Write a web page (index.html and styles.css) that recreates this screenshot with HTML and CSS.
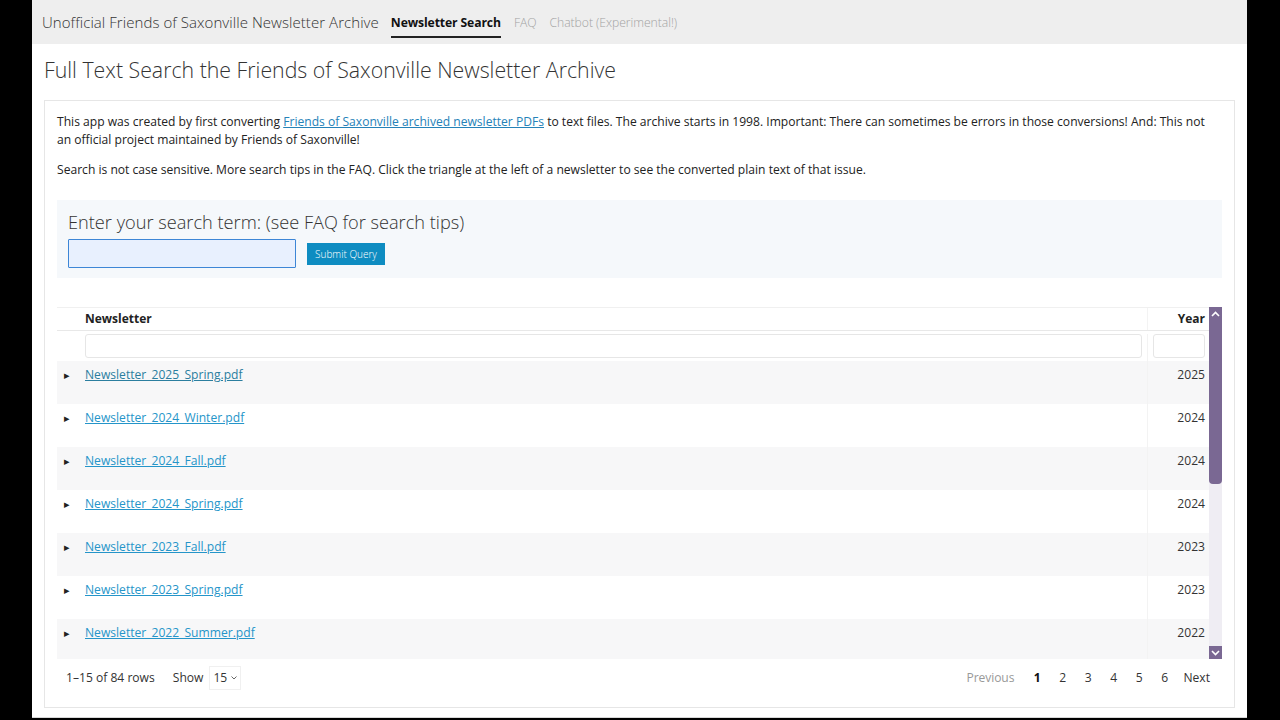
FILE: index.html
```html
<!DOCTYPE html>
<html>
<head>
<meta charset="utf-8">
<title>Newsletter Search</title>
<link rel="stylesheet" href="styles.css">
</head>
<body>
<div class="page">
  <nav class="navbar">
    <span class="brand">Unofficial Friends of Saxonville Newsletter Archive</span>
    <a class="nav-item active">Newsletter Search</a>
    <a class="nav-item">FAQ</a>
    <a class="nav-item">Chatbot (Experimental!)</a>
  </nav>
  <main class="content">
    <h1 class="title">Full Text Search the Friends of Saxonville Newsletter Archive</h1>
    <section class="card">
      <p class="intro">This app was created by first converting <a class="link" href="#">Friends of Saxonville archived newsletter PDFs</a> to text files. The archive starts in 1998. Important: There can sometimes be errors in those conversions! And: This not an official project maintained by Friends of Saxonville!</p>
      <p class="intro">Search is not case sensitive. More search tips in the FAQ. Click the triangle at the left of a newsletter to see the converted plain text of that issue.</p>
      <div class="search-panel">
        <label class="search-label">Enter your search term: (see FAQ for search tips)</label>
        <div class="search-row">
          <input class="search-input" type="text">
          <button class="submit-btn">Submit Query</button>
        </div>
      </div>
      <div class="table-wrap">
        <div class="table-scroll">
          <div class="grid header-row">
            <div class="cell"></div>
            <div class="cell name">Newsletter</div>
            <div class="cell year">Year</div>
          </div>
          <div class="grid filter-row">
            <div class="cell"></div>
            <div class="cell name"><span class="filter-box"></span></div>
            <div class="cell year"><span class="filter-box"></span></div>
          </div>
          <div class="grid row odd"><div class="cell arrow">&#9656;</div><div class="cell name"><a class="row-link first">Newsletter_2025_Spring.pdf</a></div><div class="cell year">2025</div></div>
          <div class="grid row"><div class="cell arrow">&#9656;</div><div class="cell name"><a class="row-link">Newsletter_2024_Winter.pdf</a></div><div class="cell year">2024</div></div>
          <div class="grid row odd"><div class="cell arrow">&#9656;</div><div class="cell name"><a class="row-link">Newsletter_2024_Fall.pdf</a></div><div class="cell year">2024</div></div>
          <div class="grid row"><div class="cell arrow">&#9656;</div><div class="cell name"><a class="row-link">Newsletter_2024_Spring.pdf</a></div><div class="cell year">2024</div></div>
          <div class="grid row odd"><div class="cell arrow">&#9656;</div><div class="cell name"><a class="row-link">Newsletter_2023_Fall.pdf</a></div><div class="cell year">2023</div></div>
          <div class="grid row"><div class="cell arrow">&#9656;</div><div class="cell name"><a class="row-link">Newsletter_2023_Spring.pdf</a></div><div class="cell year">2023</div></div>
          <div class="grid row odd"><div class="cell arrow">&#9656;</div><div class="cell name"><a class="row-link">Newsletter_2022_Summer.pdf</a></div><div class="cell year">2022</div></div>
          <div class="grid row"><div class="cell arrow">&#9656;</div><div class="cell name"><a class="row-link">Newsletter_2022_Spring.pdf</a></div><div class="cell year">2022</div></div>
        </div>
        <div class="scrollbar">
          <div class="sb-btn"><svg width="9" height="6" viewBox="0 0 9 6"><path d="M1 5 L4.5 1.5 L8 5" fill="none" stroke="#fff" stroke-width="1.6"/></svg></div>
          <div class="sb-track"><div class="sb-thumb"></div></div>
          <div class="sb-btn"><svg width="9" height="6" viewBox="0 0 9 6"><path d="M1 1 L4.5 4.5 L8 1" fill="none" stroke="#fff" stroke-width="1.6"/></svg></div>
        </div>
      </div>
      <div class="table-footer">
        <div class="rows-info">
          <span class="count">1–15 of 84 rows</span>
          <span class="show">Show</span>
          <span class="page-size">15 <svg width="6" height="4" viewBox="0 0 6 4"><path d="M0.5 0.5 L3 3 L5.5 0.5" fill="none" stroke="#555" stroke-width="0.9"/></svg></span>
        </div>
        <div class="pager">
          <span class="prev">Previous</span>
          <span class="pg current">1</span>
          <span class="pg">2</span>
          <span class="pg">3</span>
          <span class="pg">4</span>
          <span class="pg">5</span>
          <span class="pg">6</span>
          <span class="next">Next</span>
        </div>
      </div>
    </section>
  </main>
</div>
</body>
</html>
```
FILE: styles.css
```css
* { box-sizing: border-box; }
html, body { margin: 0; padding: 0; }
body {
  background: #000;
  font-family: "Open Sans", "Noto Sans", sans-serif;
  color: #222;
}
.page {
  margin-left: 32px;
  width: 1215px;
  height: 718px;
  background: #fff;
  border-bottom: 1px solid #d8d8d8;
}
.navbar {
  height: 44px;
  background: #eeeeee;
  display: flex;
  align-items: center;
  padding-left: 10px;
}
.brand {
  font-size: 15px;
  font-weight: 300;
  color: #333;
  margin-right: 12px;
  letter-spacing: 0.06px;
}
.nav-item {
  font-size: 12.2px;
  color: #a3a3a3;
  font-weight: 300;
  margin-right: 13px;
  height: 44px;
  display: flex;
  align-items: center;
  position: relative;
  letter-spacing: -0.05px;
}
.nav-item.active {
  color: #111;
  font-weight: 700;
  letter-spacing: -0.12px;
}
.nav-item.active::after {
  content: "";
  position: absolute;
  left: 0;
  right: 0;
  top: 36px;
  height: 2px;
  background: #222;
}
.content {
  padding: 0 12px;
}
.title {
  margin: 0;
  padding-top: 12px;
  height: 56px;
  font-size: 21.3px;
  font-weight: 300;
  color: #333;
  line-height: 28px;
  letter-spacing: 0px;
}
.card {
  border: 1px solid #e6e6e6;
  height: 608px;
  padding: 12px 12px 0 12px;
}
.intro {
  margin: 0 0 12px 0;
  font-size: 12.1px;
  line-height: 18px;
  color: #222;
}
.link {
  color: #2582b8;
  text-decoration: underline;
}
.search-panel {
  margin-top: 21px;
  background: #f5f8fb;
  height: 78px;
  padding: 10px 11px;
}
.search-label {
  display: block;
  font-size: 18.2px;
  font-weight: 300;
  color: #333;
  line-height: 24px;
  margin-bottom: 5px;
}
.search-row {
  display: flex;
  align-items: center;
}
.search-input {
  width: 228px;
  height: 29px;
  background: #e8f0fe;
  border: 1px solid #3d86d6;
  border-radius: 1px;
  margin: 0;
  outline: none;
}
.submit-btn {
  margin-left: 11px;
  width: 78px;
  height: 22px;
  background: #0e8cc1;
  color: #fff;
  border: none;
  font-family: "Open Sans", sans-serif;
  font-size: 10px;
  font-weight: 300;
  padding: 0;
}
.table-wrap {
  margin-top: 29px;
  height: 352px;
  display: flex;
}
.table-scroll {
  flex: 1;
  overflow: hidden;
}
.grid {
  display: grid;
  grid-template-columns: 20px 1fr 61px;
}
.cell.name {
  padding: 0 5px 0 8px;
  border-right: 1px solid #f3f3f3;
}
.cell.year {
  padding: 0 4px 0 5px;
  text-align: right;
}
.header-row {
  height: 24px;
  border-top: 1px solid #f0f0f0;
  border-bottom: 1px solid #e8e8e8;
  font-size: 12px;
  font-weight: 700;
  color: #222;
  line-height: 22px;
}
.filter-row {
  height: 30px;
  padding-top: 3px;
}
.filter-box {
  display: block;
  height: 24px;
  border: 1px solid #e6e6e6;
  border-radius: 3px;
  background: #fff;
}
.row {
  height: 43px;
  font-size: 12.1px;
  line-height: 27px;
  color: #333;
}
.row.odd { background: #f7f7f8; }
.cell.arrow {
  font-size: 11px;
  padding-left: 7px;
  color: #222;
}
.row-link {
  color: #2595c9;
  text-decoration: underline;
}
.row-link.first { color: #2b7e9f; }
.scrollbar {
  width: 13px;
  display: flex;
  flex-direction: column;
  background: #efedf3;
}
.sb-btn {
  height: 13px;
  background: #7a6893;
  display: flex;
  align-items: center;
  justify-content: center;
}
.sb-track {
  flex: 1;
}
.sb-thumb {
  height: 164px;
  background: #7a6893;
  border-radius: 0 0 4px 4px;
}
.table-footer {
  height: 36px;
  display: flex;
  justify-content: space-between;
  align-items: center;
  font-size: 12.1px;
  line-height: 20px;
  color: #333;
  padding: 2px 12px 0 9px;
}
.rows-info {
  display: flex;
  align-items: center;
}
.show { margin-left: 18px; }
.page-size {
  margin-left: 6px;
  border: 1px solid #f0f0f0;
  padding: 2px 3px;
  display: inline-flex;
  align-items: center;
  gap: 4px;
  line-height: 18px;
}
.pager {
  display: flex;
  align-items: center;
}
.prev { color: #999; margin-right: 10px; letter-spacing: -0.1px; }
.pg { margin: 0 9.3px; }
.pg.current { font-weight: 700; color: #111; }
.next { margin-left: 6px; color: #333; }
```
